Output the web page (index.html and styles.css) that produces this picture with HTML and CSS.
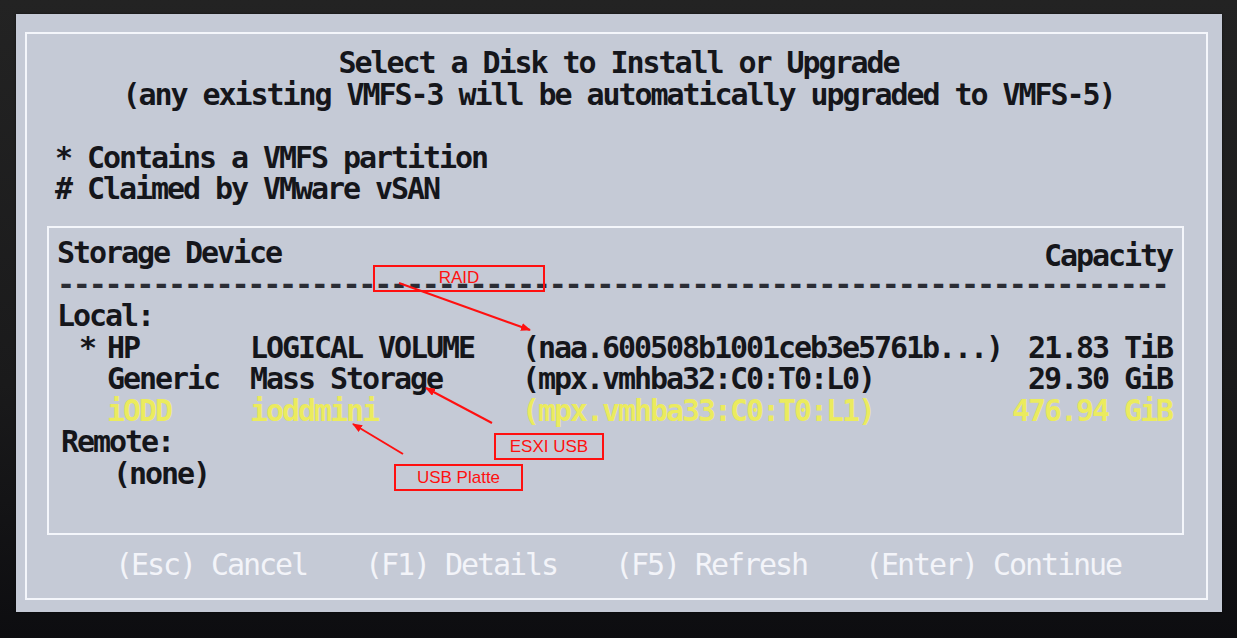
FILE: index.html
```html
<!DOCTYPE html>
<html lang="en">
<head>
<meta charset="utf-8">
<title>Select a Disk to Install or Upgrade</title>
<link rel="stylesheet" href="styles.css">
</head>
<body>
<div class="screen">
  <div class="panel">
    <div class="frame">
      <div class="title">
        <div>Select a Disk to Install or Upgrade</div>
        <div>(any existing VMFS-3 will be automatically upgraded to VMFS-5)</div>
      </div>
      <div class="legend">
        <div>* Contains a VMFS partition</div>
        <div># Claimed by VMware vSAN</div>
      </div>
      <div class="table">
        <div class="thead"><span>Storage Device</span><span class="cap-head">Capacity</span></div>
        <div class="rule">----------------------------------------------------------------------</div>
        <div class="group">Local:</div>
        <div class="dev"><span class="mark">*</span><span>HP</span><span>LOGICAL VOLUME</span><span>(naa.600508b1001ceb3e5761b...)</span><span class="cap">21.83 TiB</span></div>
        <div class="dev"><span class="mark"></span><span>Generic</span><span>Mass Storage</span><span>(mpx.vmhba32:C0:T0:L0)</span><span class="cap">29.30 GiB</span></div>
        <div class="dev selected"><span class="mark"></span><span>iODD</span><span>ioddmini</span><span>(mpx.vmhba33:C0:T0:L1)</span><span class="cap">476.94 GiB</span></div>
        <div class="group remote">Remote:</div>
        <div class="none">(none)</div>
      </div>
      <div class="keys">
        <span>(Esc) Cancel</span>
        <span>(F1) Details</span>
        <span>(F5) Refresh</span>
        <span>(Enter) Continue</span>
      </div>
    </div>
  </div>

  <svg class="arrows" width="1237" height="638" viewBox="0 0 1237 638">
    <defs>
      <marker id="head" markerWidth="10" markerHeight="8" refX="9" refY="4" orient="auto" markerUnits="userSpaceOnUse">
        <path d="M0,0 L10,4 L0,8 Z" fill="#ff1010"/>
      </marker>
    </defs>
    <line x1="399" y1="283" x2="530" y2="330" stroke="#ff1010" stroke-width="2" marker-end="url(#head)"/>
    <line x1="492" y1="423" x2="426" y2="388" stroke="#ff1010" stroke-width="2" marker-end="url(#head)"/>
    <line x1="403" y1="454" x2="353" y2="424" stroke="#ff1010" stroke-width="2" marker-end="url(#head)"/>
  </svg>
  <div class="note note-raid">RAID</div>
  <div class="note note-esxi">ESXI USB</div>
  <div class="note note-usb">USB Platte</div>
</div>
</body>
</html>
```
FILE: styles.css
```css
html, body {
  margin: 0;
  padding: 0;
}
body {
  background: #141416;
}
.screen {
  position: relative;
  width: 1237px;
  height: 638px;
  overflow: hidden;
  background: linear-gradient(180deg, #232323 0%, #1a1a1b 60%, #0d0d10 100%);
}
.panel {
  position: absolute;
  left: 16px;
  top: 14px;
  width: 1206px;
  height: 598px;
  box-sizing: border-box;
  padding: 18px 14px 12px 9px;
  background: #c5cad6;
  box-shadow: 0 0 2px rgba(0,0,0,0.6);
}
.frame {
  box-sizing: border-box;
  height: 568px;
  border: 2px solid #f4f6fb;
  padding-top: 13px;
  font-family: "DejaVu Sans Mono", "Liberation Mono", monospace;
  font-size: 30px;
  letter-spacing: -2.06px;
  color: #15161b;
  font-weight: bold;
  white-space: nowrap;
}
.title {
  text-align: center;
  line-height: 32px;
  padding-left: 4px;
}
.legend {
  margin-top: 31px;
  padding-left: 28px;
  line-height: 31px;
}
.table {
  box-sizing: border-box;
  margin: 22px 0 0 20px;
  width: 1137px;
  height: 309px;
  border: 2px solid #f4f6fb;
  padding: 9px 10px 0 8px;
  line-height: 31.5px;
}
.thead {
  display: flex;
  justify-content: space-between;
}
.cap-head {
  position: relative;
  top: 3px;
}
.rule {
  letter-spacing: -2.2px;
  color: #2b2d35;
}
.dev {
  display: grid;
  grid-template-columns: 50px 143px 272px 1fr auto;
}
.dev .mark {
  padding-left: 22px;
}
.dev .cap {
  text-align: right;
}
.selected {
  color: #ebeb5e;
}
.remote {
  padding-left: 4px;
}
.none {
  padding-left: 56px;
}
.keys {
  display: flex;
  gap: 58px;
  margin-top: 14px;
  padding-left: 88px;
  line-height: 32px;
  color: #f3f4f9;
  font-weight: normal;
}
.arrows {
  position: absolute;
  left: 0;
  top: 0;
  pointer-events: none;
}
.note {
  position: absolute;
  box-sizing: border-box;
  border: 2px solid #ff1010;
  color: #ff1010;
  font-family: "Liberation Sans", Arial, sans-serif;
  font-size: 17px;
  display: flex;
  align-items: center;
  justify-content: center;
}
.note-raid {
  left: 373px;
  top: 265px;
  width: 172px;
  height: 27px;
  padding-bottom: 1px;
}
.note-esxi {
  left: 494px;
  top: 433px;
  width: 110px;
  height: 27px;
}
.note-usb {
  left: 394px;
  top: 464px;
  width: 129px;
  height: 27px;
}
```
